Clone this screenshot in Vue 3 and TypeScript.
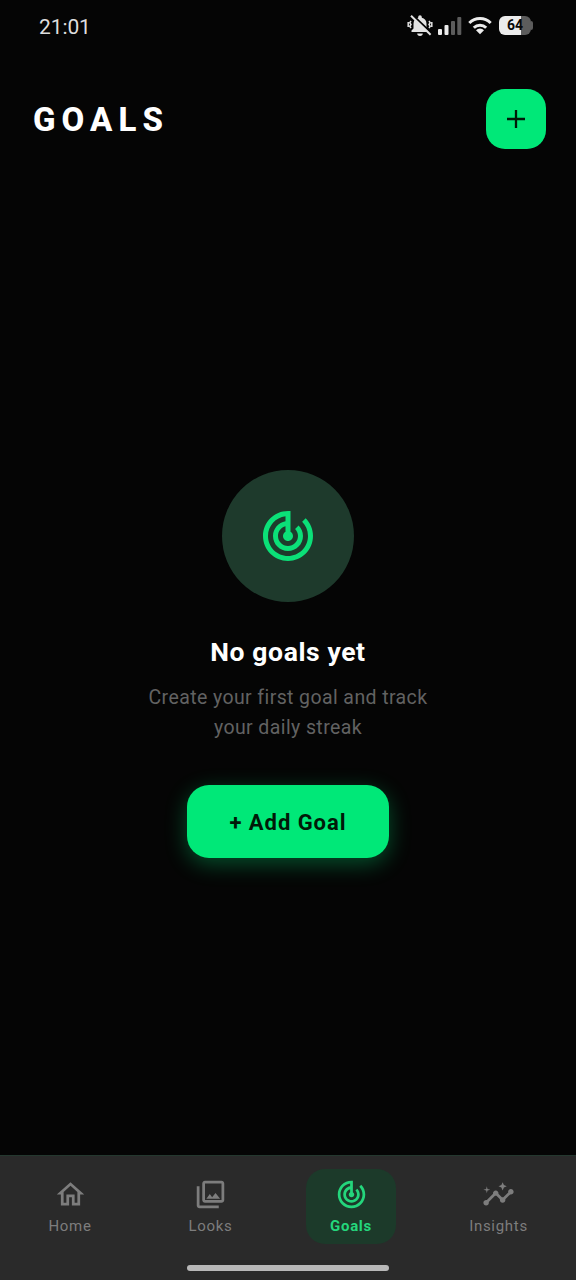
<script setup lang="ts">
interface Tab {
  label: string
  paths: string[]
  active?: boolean
}

const goalsIcon =
  'M19.07 4.93l-1.41 1.41C19.1 7.79 20 9.79 20 12c0 4.42-3.58 8-8 8s-8-3.58-8-8c0-4.08 3.05-7.44 7-7.93v2.02C8.16 6.57 6 9.03 6 12c0 3.31 2.69 6 6 6s6-2.69 6-6c0-1.66-.67-3.16-1.76-4.24l-1.41 1.41C15.55 9.9 16 10.9 16 12c0 2.21-1.79 4-4 4s-4-1.79-4-4c0-1.86 1.28-3.41 3-3.86v2.14c-.6.35-1 .98-1 1.72 0 1.1.9 2 2 2s2-.9 2-2c0-.74-.4-1.38-1-1.72V2h-1C6.48 2 2 6.48 2 12s4.48 10 10 10 10-4.48 10-10c0-2.76-1.12-5.26-2.93-7.07z'

const tabs: Tab[] = [
  {
    label: 'Home',
    paths: ['M12 5.69l5 4.5V18h-2v-6H9v6H7v-7.81l5-4.5M12 3L2 12h3v8h6v-6h2v6h6v-8h3L12 3z'],
  },
  {
    label: 'Looks',
    paths: [
      'M20 4v12H8V4h12m0-2H8c-1.1 0-2 .9-2 2v12c0 1.1.9 2 2 2h12c1.1 0 2-.9 2-2V4c0-1.1-.9-2-2-2zm-8.5 9.67l1.69 2.26 2.48-3.1L19 15H9zM2 6v14c0 1.1.9 2 2 2h14v-2H4V6H2z',
    ],
  },
  { label: 'Goals', paths: [goalsIcon], active: true },
  {
    label: 'Insights',
    paths: [
      'M21 8c-1.45 0-2.26 1.44-1.93 2.51l-3.55 3.56c-.3-.09-.74-.09-1.04 0l-2.55-2.55C12.27 10.45 11.46 9 10 9c-1.45 0-2.27 1.44-1.93 2.52l-4.56 4.55C2.44 15.74 1 16.55 1 18c0 1.1.9 2 2 2 1.45 0 2.26-1.44 1.93-2.51l4.55-4.56c.3.09.74.09 1.04 0l2.55 2.55C12.73 16.55 13.54 18 15 18c1.45 0 2.27-1.44 1.93-2.52l3.56-3.55C21.56 12.26 23 11.45 23 10c0-1.1-.9-2-2-2z',
      'M15 9l.94-2.07L18 6l-2.06-.93L15 3l-.92 2.07L12 6l2.08.93z',
      'M3.5 11L4 9l2-.5L4 8l-.5-2L3 8l-2 .5L3 9z',
    ],
  },
]
</script>

<template>
  <div class="screen">
    <div class="status">
      <span class="clock">21:01</span>
      <div class="indicators">
        <svg class="bell" viewBox="0 0 26 24">
          <path
            d="M4.500 18v-1.500l2-2V9.800c0-3.200 1.900-5.400 4.700-6V3a1.800 1.800 0 0 1 3.600 0v.8c2.800.6 4.700 2.800 4.700 6v4.700l2 2V18z M10.200 19.600h5.600a2.800 2.400 0 0 1-5.600 0z"
            fill="#e4e4e4"
          />
          <path
            d="M4 7l-1.200 1.800L4 10.500l-1.200 1.800L4 14M1.200 8v5M22 7l1.200 1.800-1.200 1.700 1.200 1.800L22 14M24.800 8v5"
            fill="none"
            stroke="#e4e4e4"
            stroke-width="1.500"
          />
          <path d="M5.800 1.200L25 19.400" stroke="#050505" stroke-width="2" />
          <path d="M4 1.800L23.600 20.800" stroke="#e4e4e4" stroke-width="2" />
        </svg>
        <svg class="signal" viewBox="0 0 24 20">
          <rect x="0" y="13" width="4" height="6" rx="1" fill="#ececec" />
          <rect x="6.500" y="9" width="4" height="10" rx="1" fill="#ececec" />
          <rect x="13" y="5" width="4" height="14" rx="1" fill="#5c5c5c" />
          <rect x="19.300" y="1" width="4" height="18" rx="1" fill="#5c5c5c" />
        </svg>
        <svg class="wifi" viewBox="0 0 24 19">
          <g fill="none" stroke="#ececec" stroke-width="3">
            <path d="M1.300 7a15.200 15.200 0 0 1 21.400 0" />
            <path d="M5.800 11.700a8.800 8.800 0 0 1 12.400 0" />
          </g>
          <path d="M8 14.200a5.700 5.700 0 0 1 8 0l-4 4z" fill="#ececec" />
        </svg>
        <div class="battery"><span class="level">64</span></div>
      </div>
    </div>

    <header class="header">
      <h1>GOALS</h1>
      <button class="add" aria-label="Add goal">
        <svg viewBox="0 0 20 20"><path d="M10 1v18M1 10h18" stroke="#001a08" stroke-width="2.300" /></svg>
      </button>
    </header>

    <main class="empty">
      <div class="badge">
        <svg viewBox="0 0 24 24"><path :d="goalsIcon" fill="#0be078" /></svg>
      </div>
      <h2>No goals yet</h2>
      <p>Create your first goal and track<br />your daily streak</p>
      <button class="cta">+ Add Goal</button>
    </main>

    <nav class="tabbar">
      <div v-for="tab in tabs" :key="tab.label" class="tab" :class="{ active: tab.active }">
        <svg viewBox="0 0 24 24"><path v-for="d in tab.paths" :key="d" :d="d" fill="currentColor" /></svg>
        <span>{{ tab.label }}</span>
      </div>
      <div class="handle"></div>
    </nav>
  </div>
</template>

<style>
body {
  background: #050505;
}
</style>

<style scoped>
.screen {
  width: 576px;
  height: 1280px;
  display: flex;
  flex-direction: column;
  background: #050505;
  color: #fff;
  font-family: Roboto, "Liberation Sans", sans-serif;
  overflow: hidden;
}
button {
  border: 0;
  padding: 0;
  font-family: inherit;
}
h1,
h2,
p {
  margin: 0;
}
.status {
  height: 53px;
  padding: 0 45px 0 39px;
  display: flex;
  align-items: center;
  justify-content: space-between;
}
.clock {
  font-size: 21px;
  line-height: 24px;
  color: #dedede;
  letter-spacing: -0.1px;
}
.indicators {
  display: flex;
  align-items: center;
  margin-top: -2px;
}
.bell {
  width: 26px;
  height: 24px;
  margin-right: 5px;
}
.signal {
  width: 24px;
  height: 20px;
  margin-right: 6px;
}
.wifi {
  width: 24px;
  height: 19px;
  margin-right: 7px;
}
.battery {
  position: relative;
  width: 32px;
  height: 19px;
  border-radius: 6px;
  background: linear-gradient(90deg, #ececec 0 22px, #5c5c5c 22px);
}
.battery::after {
  content: "";
  position: absolute;
  left: 32px;
  top: 5px;
  width: 2px;
  height: 9px;
  border-radius: 0 2px 2px 0;
  background: #5c5c5c;
}
.level {
  display: block;
  text-align: center;
  font-size: 14px;
  line-height: 19px;
  font-weight: 700;
  color: #080808;
}
.header {
  height: 60px;
  margin-top: 36px;
  padding: 0 30px 0 33px;
  display: flex;
  align-items: center;
  justify-content: space-between;
}
h1 {
  padding-top: 1px;
  font-size: 33px;
  line-height: 40px;
  font-weight: 800;
  letter-spacing: 6.1px;
}
.add {
  width: 60px;
  height: 60px;
  border-radius: 19px;
  background: #00e878;
  display: grid;
  place-items: center;
}
.add svg {
  width: 20px;
  height: 20px;
}
.empty {
  flex: 1;
  display: flex;
  flex-direction: column;
  align-items: center;
  padding-top: 321px;
}
.badge {
  width: 132px;
  height: 132px;
  border-radius: 50%;
  background: #1e3a2c;
  display: grid;
  place-items: center;
}
.badge svg {
  width: 60px;
  height: 60px;
}
h2 {
  margin-top: 34px;
  font-size: 26.500px;
  line-height: 32px;
  font-weight: 700;
  letter-spacing: 0.6px;
}
p {
  margin-top: 15px;
  text-align: center;
  font-size: 19.5px;
  line-height: 30px;
  color: #626262;
  letter-spacing: 0.4px;
}
.cta {
  margin-top: 42px;
  padding-top: 2px;
  width: 202px;
  height: 73px;
  border-radius: 22px;
  background: #00e878;
  color: #001a08;
  font-size: 22px;
  font-weight: 700;
  letter-spacing: 0.95px;
  box-shadow: 0 6px 22px rgba(0, 232, 120, 0.33);
}
.tabbar {
  position: relative;
  height: 125px;
  box-sizing: border-box;
  border-top: 1px solid #24382f;
  background: #2a2a2a;
  display: grid;
  grid-template-columns: 140px 141px 140px 155px;
  justify-items: center;
  align-items: start;
  padding-top: 13px;
}
.tab {
  min-width: 90px;
  height: 75px;
  box-sizing: border-box;
  padding-top: 9px;
  display: flex;
  flex-direction: column;
  align-items: center;
  border-radius: 19px;
  color: #7d7d7d;
}
.tab svg {
  width: 33px;
  height: 33px;
}
.tab span {
  margin-top: 6px;
  font-size: 15px;
  line-height: 18px;
  letter-spacing: 0.7px;
}
.tab.active {
  background: #1c3a2a;
  color: #24d67c;
}
.tab.active span {
  font-weight: 700;
}
.handle {
  position: absolute;
  left: 187px;
  bottom: 9.500px;
  width: 202px;
  height: 6px;
  border-radius: 3px;
  background: #b8b8b8;
}
</style>
